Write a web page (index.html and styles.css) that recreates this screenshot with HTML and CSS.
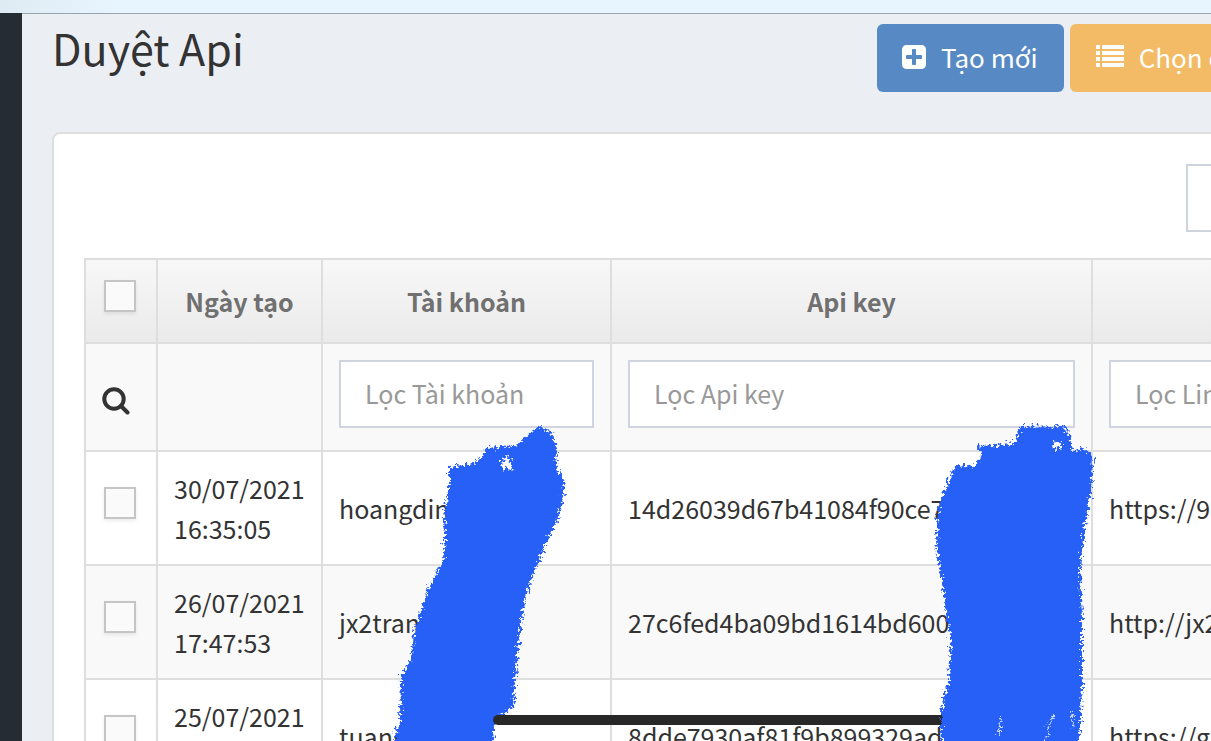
FILE: index.html
```html
<!DOCTYPE html>
<html lang="vi">
<head>
    <meta charset="UTF-8">
    <meta name="viewport" content="width=device-width, initial-scale=1.0">
    <title>Duyệt Api</title>
    <link rel="stylesheet" href="styles.css">
</head>
<body>
    <div class="topbar"></div>
    <div class="page">
        <aside class="sidebar"></aside>
        <main class="content">
            <header class="page-head">
                <h1>Duyệt Api</h1>
                <div class="actions">
                    <button class="btn btn-blue" type="button">
                        <svg class="icon" viewBox="0 0 1792 1792" aria-hidden="true"><path d="M1408 960V832q0-26-19-45t-45-19h-320V448q0-26-19-45t-45-19H832q-26 0-45 19t-19 45v320H448q-26 0-45 19t-19 45v128q0 26 19 45t45 19h320v320q0 26 19 45t45 19h128q26 0 45-19t19-45v-320h320q26 0 45-19t19-45zm256-544v960q0 119-84.500 203.500T1376 1664H416q-119 0-203.500-84.500T128 1376V416q0-119 84.500-203.500T416 128h960q119 0 203.500 84.500T1664 416z"/></svg>
                        <span>Tạo mới</span>
                    </button>
                    <button class="btn btn-orange" type="button">
                        <svg class="icon" viewBox="0 0 28 28" aria-hidden="true"><path d="M0 2h4v4H0zM6 2h22v4H6zM0 8h4v4H0zM6 8h22v4H6zM0 14h4v4H0zM6 14h22v4H6zM0 20h4v4H0zM6 20h22v4H6z"/></svg>
                        <span>Chọn cột</span>
                    </button>
                </div>
            </header>
            <section class="portlet">
                <div class="toolbar">
                    <input class="field" type="text" aria-label="Tìm kiếm">
                </div>
                <table class="api-table">
                    <colgroup>
                        <col class="col-check"><col class="col-date"><col class="col-user"><col class="col-key"><col>
                    </colgroup>
                    <thead>
                        <tr class="head-row">
                            <th><input type="checkbox" aria-label="Chọn tất cả"></th>
                            <th>Ngày tạo</th>
                            <th>Tài khoản</th>
                            <th>Api key</th>
                            <th>Link</th>
                        </tr>
                        <tr class="filter-row">
                            <td><svg class="icon search" viewBox="0 0 28 28" aria-hidden="true"><circle cx="12" cy="12" r="9.700"/><path d="M19 19l6.500 6.500"/></svg></td>
                            <td></td>
                            <td><input class="field" type="text" placeholder="Lọc Tài khoản" aria-label="Lọc Tài khoản"></td>
                            <td><input class="field" type="text" placeholder="Lọc Api key" aria-label="Lọc Api key"></td>
                            <td><input class="field" type="text" placeholder="Lọc Link" aria-label="Lọc Link"></td>
                        </tr>
                    </thead>
                    <tbody>
                        <tr>
                            <td><input type="checkbox" aria-label="Chọn hoangdinh"></td>
                            <td>30/07/2021 16:35:05</td>
                            <td>hoangdinh</td>
                            <td>14d26039d67b41084f90ce7</td>
                            <td>https://9</td>
                        </tr>
                        <tr>
                            <td><input type="checkbox" aria-label="Chọn jx2trank"></td>
                            <td>26/07/2021 17:47:53</td>
                            <td>jx2trank</td>
                            <td>27c6fed4ba09bd1614bd600</td>
                            <td>http://jx2</td>
                        </tr>
                        <tr>
                            <td><input type="checkbox" aria-label="Chọn tuang"></td>
                            <td>25/07/2021 09:12:40</td>
                            <td>tuang</td>
                            <td>8dde7930af81f9b899329ad</td>
                            <td>https://g</td>
                        </tr>
                    </tbody>
                </table>
            </section>
        </main>
    </div>
    <!-- marker strokes and home bar over the table -->
    <svg class="marker" width="1211" height="741" viewBox="0 0 1211 741" aria-hidden="true">
        <defs>
            <filter id="rough" x="-5%" y="-5%" width="110%" height="110%">
                <feTurbulence type="fractalNoise" baseFrequency="0.35" numOctaves="3" seed="4"/>
                <feDisplacementMap in="SourceGraphic" scale="12" xChannelSelector="R" yChannelSelector="G"/>
                <feGaussianBlur stdDeviation="0.4"/>
            </filter>
        </defs>
        <path class="ink" fill-rule="evenodd" filter="url(#rough)" d="M449 467L473 464L482 457L487 448L516 446L535 429L541 427L553 435L557 450L556 467L563 479L564 493L559 518L545 545L533 575L525 598L521 625L516 666L513 708L499 716L494 725L492 760L392 760L395 733L400 722L401 676L410 661L415 628L427 592L443 560L445 540L444 515L449 485ZM507 456L500 463L508 471L512 467L510 458Z"/>
        <path class="bar" d="M498 720H945"/>
        <path class="ink" fill-rule="evenodd" filter="url(#rough)" d="M956 465L974 467L981 458L979 446L1014 444L1021 427L1062 426L1070 434L1072 452L1084 448L1093 456L1091 492L1084 530L1080 570L1082 620L1082 685L1081 715L1077 760L941 760L941 710L949 680L951 640L946 610L941 576L936 545L938 508L946 488ZM1055 440L1052 446L1057 450L1062 445Z"/>
        <g class="scratch" filter="url(#rough)"><path d="M1001 717L999 735M1054 715L1047 727M1049 728L1047 741M1071 712L1074 728"/></g>
    </svg>
</body>
</html>
```
FILE: styles.css
```css
* { box-sizing: border-box; }
html, body { height: 100%; }
body { margin: 0; display: flex; flex-direction: column; position: relative; overflow: hidden; background: #ebeef3; color: #333; font-family: "Noto Sans CJK SC", "Open Sans", sans-serif; font-size: 25px; line-height: 40px; }
button, input { font: inherit; }
.topbar { flex: none; height: 13px; background: linear-gradient(to right, #dfebf3, #e7f5fe 120px); }
.page { flex: 1; min-height: 0; display: flex; }
.sidebar { flex: none; width: 22px; background: #252c33; }
.content { flex: 1; min-width: 0; display: flex; flex-direction: column; padding-left: 30px; border-top: 1px solid #9aa5af; }
.page-head { flex: none; display: grid; grid-template-columns: 1fr 334px; align-items: start; padding-top: 10px; height: 118px; }
h1 { margin: 0; font-size: 43px; font-weight: 400; line-height: 46px; }
.actions { display: flex; gap: 6px; min-width: 0; overflow: hidden; }
.btn { flex: none; display: flex; align-items: center; gap: 13px; height: 68px; padding: 0 26px 2px 23px; border: 0; border-radius: 6px; color: #fff; font-size: 26px; white-space: nowrap; cursor: pointer; }
.btn-blue { background: #578ac4; }
.btn-orange { background: #f4bb66; padding-left: 26px; gap: 15px; }
.icon { display: block; width: 28px; height: 28px; fill: currentColor; }
.search { fill: none; stroke: #333; stroke-width: 4; stroke-linecap: round; margin-top: 8px; }
.portlet { flex: 1; min-height: 0; background: #fff; border: 2px solid #dedede; border-width: 2px 0 0 2px; border-radius: 8px 0 0 0; padding: 30px 0 0 30px; overflow: hidden; }
.toolbar { display: grid; grid-template-columns: 1fr 300px; margin-right: -275px; margin-bottom: 26px; }
.toolbar .field { grid-column: 2; }
.field { display: block; width: 100%; height: 68px; padding: 0 24px 2px; border: 2px solid #d0d4e0; border-radius: 0; background: #fff; color: #555; }
.field::placeholder { color: #999; opacity: 1; }
.api-table { width: calc(100% + 400px); table-layout: fixed; border-collapse: collapse; }
.col-check { width: 72px; }
.col-date { width: 165px; }
.col-user { width: 289px; }
.col-key { width: 481px; }
.api-table th, .api-table td { border: 2px solid #dedede; padding: 16px; vertical-align: middle; overflow: hidden; }
.head-row { height: 84px; background: linear-gradient(to bottom, #f8f8f8, #eaeaea); }
.head-row th { color: #707070; font-weight: 700; }
.filter-row, tbody tr:nth-child(even) { background: #f9f9f9; }
.filter-row .field { margin-bottom: 6px; }
input[type="checkbox"] { appearance: none; display: block; width: 32px; height: 32px; margin: 0 0 10px 2px; border: 2px solid #c5c5c5; background: #fafafa; box-shadow: 0 2px 4px rgba(0, 0, 0, 0.08); }
.marker { position: absolute; top: 0; left: 0; pointer-events: none; }
.ink { fill: #2860f6; }
.scratch { fill: none; stroke: #c9d8fd; stroke-width: 2; }
.bar { fill: none; stroke: #282828; stroke-width: 10; stroke-linecap: round; }
```
